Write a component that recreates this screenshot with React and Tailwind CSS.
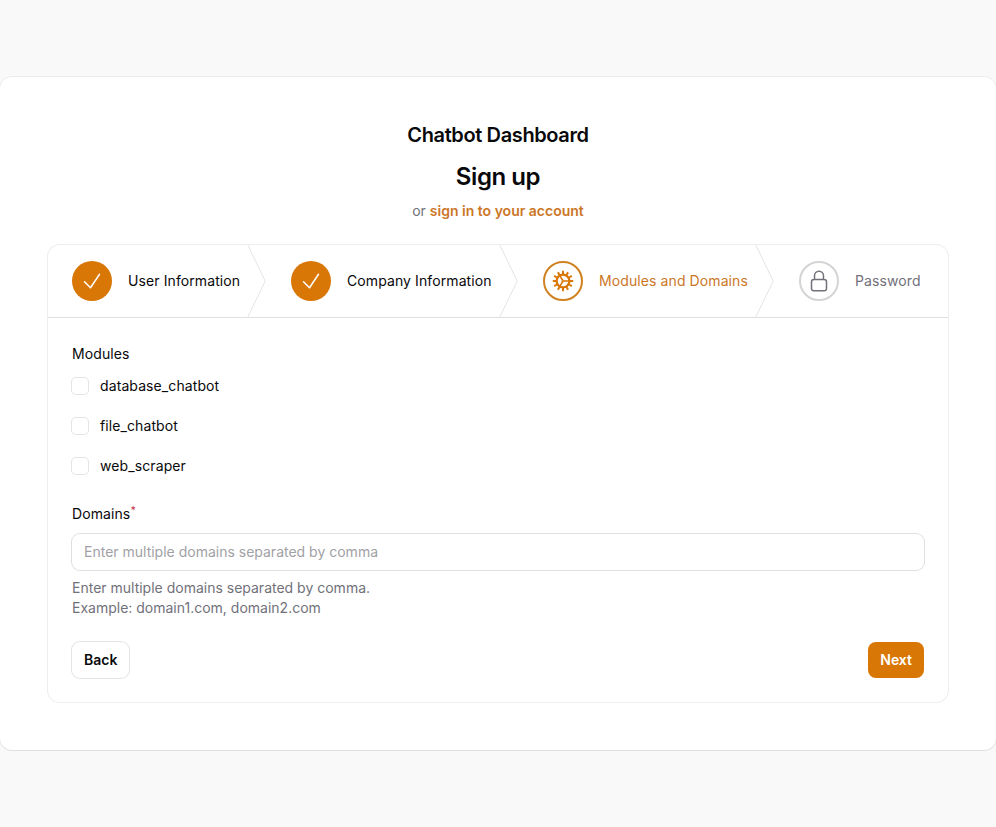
import React, { useState } from 'react';
import { HiOutlineCheck, HiOutlineLockClosed } from 'react-icons/hi2';

const toothAngles = [0, 30, 60, 90, 120, 150, 180, 210, 240, 270, 300, 330];

const CogIcon = ({ className }) => (
  <svg className={className} viewBox="0 0 24 24" fill="none" stroke="currentColor">
    <circle cx="12" cy="12" r="6.4" strokeWidth="2.3" />
    {toothAngles.map((angle) => (
      <path key={angle} d="M12 5V1.8" strokeWidth="2" transform={`rotate(${angle} 12 12)`} />
    ))}
    <path d="M12.8 12H18M11.6 11.3L9 6.8M11.6 12.7L9 17.2" strokeWidth="1.6" />
    <circle cx="12" cy="12" r="1" strokeWidth="1" />
  </svg>
);

const steps = [
  { label: 'User Information', status: 'done', icon: HiOutlineCheck },
  { label: 'Company Information', status: 'done', icon: HiOutlineCheck },
  { label: 'Modules and Domains', status: 'active', icon: CogIcon },
  { label: 'Password', status: 'upcoming', icon: HiOutlineLockClosed },
];

const modules = ['database_chatbot', 'file_chatbot', 'web_scraper'];

const circleStyles = {
  done: 'bg-[#d97706] text-white',
  active: 'border-2 border-[#d08222] text-[#d97706]',
  upcoming: 'border-2 border-[#d4d4d4] text-[#71717a]',
};

const labelStyles = {
  done: 'text-[#09090b]',
  active: 'text-[#cb7727]',
  upcoming: 'text-[#71717a]',
};

const Step = ({ step, last }) => {
  const Icon = step.icon;

  return (
    <li className="relative flex">
      <button type="button" className="flex h-full items-center gap-x-4 px-6 py-4">
        <span className={`flex size-10 shrink-0 items-center justify-center rounded-full ${circleStyles[step.status]}`}>
          <Icon className="size-6" />
        </span>
        <span className={`whitespace-nowrap text-sm tracking-[0.007em] ${labelStyles[step.status]}`}>
          {step.label}
        </span>
      </button>

      {!last && (
        <svg
          className="absolute right-0 top-0 h-full w-5 text-[#e4e4e7]"
          viewBox="0 0 22 80"
          fill="none"
          preserveAspectRatio="none"
        >
          <path
            d="M0 -2L20 40L0 82"
            stroke="currentColor"
            strokeLinejoin="round"
            vectorEffect="non-scaling-stroke"
          />
        </svg>
      )}
    </li>
  );
};

const App = () => {
  const [selected, setSelected] = useState([]);
  const [domains, setDomains] = useState('');

  const toggleModule = (name) => {
    setSelected(selected.includes(name) ? selected.filter((m) => m !== name) : [...selected, name]);
  };

  return (
    <div className="flex min-h-screen flex-col items-center justify-center bg-[#f9f9f9] font-['Inter',sans-serif] text-[#09090b] antialiased">
      <main className="w-full rounded-xl bg-white px-12 py-12 shadow-2xs ring-1 ring-[#09090b]/5">
        <header className="flex flex-col items-center">
          <div className="mb-4 text-xl leading-5 font-semibold tracking-[-0.019em]">Chatbot Dashboard</div>
          <h1 className="text-2xl font-semibold tracking-[-0.018em]">Sign up</h1>
          <p className="mt-2 text-sm text-[#71717a]">
            or <a href="#" className="font-semibold text-[#cb7727]">sign in to your account</a>
          </p>
        </header>

        <div className="mt-6 rounded-xl bg-white ring-1 ring-[#09090b]/7">
          <ol className="grid grid-cols-[219px_252px_256px_1fr] border-b border-[#e0e0e0]">
            {steps.map((step, i) => (
              <Step key={step.label} step={step} last={i === steps.length - 1} />
            ))}
          </ol>

          <form className="flex flex-col gap-6 p-6" onSubmit={(e) => e.preventDefault()}>
            <fieldset className="flex flex-col gap-2">
              <span className="text-sm leading-6 tracking-[0.007em]">Modules</span>
              <div className="flex flex-col gap-4">
                {modules.map((name) => (
                  <label key={name} className="flex items-center gap-3 text-sm leading-6 tracking-[0.007em]">
                    <input
                      type="checkbox"
                      checked={selected.includes(name)}
                      onChange={() => toggleModule(name)}
                      className="size-4 appearance-none rounded bg-white ring-1 ring-[#09090b]/11 checked:bg-[#d97706]"
                    />
                    {name}
                  </label>
                ))}
              </div>
            </fieldset>

            <div className="flex flex-col gap-2">
              <label htmlFor="domains" className="h-6 text-sm leading-6 tracking-[0.007em]">
                Domains<sup className="font-medium text-[#c8455a]">*</sup>
              </label>
              <input
                id="domains"
                type="text"
                value={domains}
                onChange={(e) => setDomains(e.target.value)}
                placeholder="Enter multiple domains separated by comma"
                className="h-9 w-full rounded-lg bg-white px-3 pb-px text-sm ring-1 ring-[#09090b]/13 outline-none placeholder:text-[#a1a1a5]"
              />
              <p className="text-sm text-[#71717a]">
                Enter multiple domains separated by comma.
                <br />
                Example: domain1.com, domain2.com
              </p>
            </div>

            <div className="flex items-center justify-between">
              <button type="button" className="h-9 rounded-lg bg-white px-3 text-sm font-semibold ring-1 ring-[#09090b]/11">
                Back
              </button>
              <button type="submit" className="h-9 rounded-lg bg-[#d97706] px-3 text-sm font-semibold text-white">
                Next
              </button>
            </div>
          </form>
        </div>
      </main>
    </div>
  );
};

export default App;
